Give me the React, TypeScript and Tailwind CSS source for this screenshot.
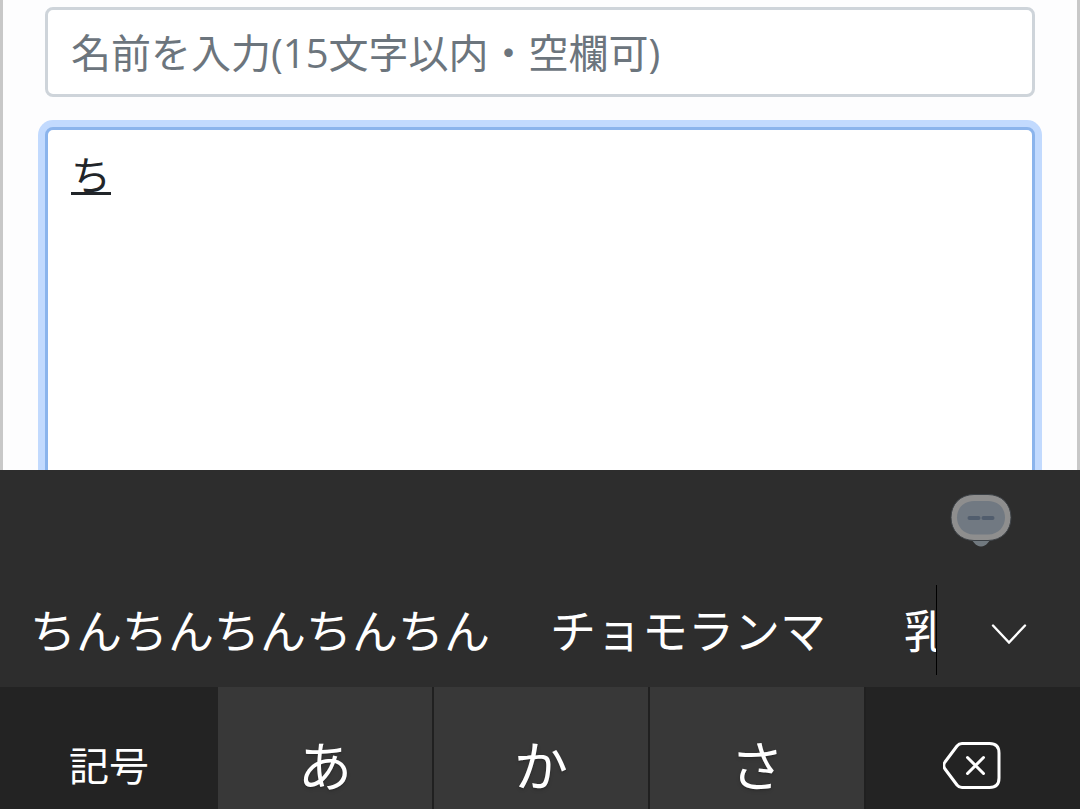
import { clsx } from "clsx";
import type { ReactNode } from "react";

type KeyProps = {
    children: ReactNode;
    label?: string;
    variant?: "kana" | "function";
};

const candidates = [
    { text: "ちんちんちんちんちん", className: "px-[30px]" },
    { text: "チョモランマ", className: "px-[30px]" },
    { text: "乳", className: "px-12" },
];

function AssistantIcon() {
    return (
        <svg width="66" height="58" viewBox="0 0 66 58" fill="none">
            <path d="M22 47h22c-4 2-5 7.500-11 7.500S26 49 22 47Z" fill="#71797f" />
            <path
                d="M26 2.500h14c14 0 23 10 23 23s-9 23-23 23H26C12 48.500 3 38.500 3 25.500s9-23 23-23Z"
                fill="#8e8e8e"
                stroke="#3b4045"
                strokeWidth="1"
            />
            <path
                d="M26 9h14c10.500 0 17 7.500 17 16.500s-6.500 17-17 17H26c-10.500 0-17-8-17-17S15.500 9 26 9Z"
                fill="#717982"
            />
            <path
                d="M21.500 26h9M35.500 26h9"
                stroke="#515d6d"
                strokeWidth="4"
                strokeLinecap="round"
            />
        </svg>
    );
}

function ChevronIcon() {
    return (
        <svg width="36" height="22" viewBox="0 0 36 22" fill="none">
            <path
                d="M2 2.500 18 19.500 34 2.500"
                stroke="#fff"
                strokeWidth="2.400"
                strokeLinecap="round"
            />
        </svg>
    );
}

function BackspaceIcon() {
    return (
        <svg width="60" height="50" viewBox="0 0 60 50" fill="none">
            <path
                d="M19 2.500h27.500q9.500 0 9.500 9.500v25q0 9.500-9.500 9.500H19q-3 0-5-2.500L2 28q-2.500-3.500 0-7L14 5q2-2.500 5-2.500Z"
                stroke="#fff"
                strokeWidth="3"
            />
            <path
                d="m24.500 16.500 16 16m0-16-16 16"
                stroke="#fff"
                strokeWidth="3"
                strokeLinecap="round"
            />
        </svg>
    );
}

function Key({ children, label, variant = "kana" }: KeyProps) {
    return (
        <button
            type="button"
            aria-label={label}
            className={clsx(
                "flex h-[158px] items-center justify-center",
                variant === "kana"
                    ? "border-r-2 border-[#202020] bg-[#383838] text-[54px] text-shadow-md"
                    : "bg-[#232323] text-[40px]",
            )}
        >
            {children}
        </button>
    );
}

function Keyboard() {
    return (
        <section className="shrink-0 bg-[#2d2d2d] text-white">
            <div className="flex h-[102px] items-center justify-end pr-[66px]">
                <button type="button" aria-label="アシスタント">
                    <AssistantIcon />
                </button>
            </div>
            <div className="flex h-[115px] items-center">
                <div className="flex h-[90px] min-w-0 flex-1 items-center overflow-hidden border-r border-black">
                    {candidates.map(({ text, className }) => (
                        <button
                            key={text}
                            type="button"
                            className={clsx(
                                "shrink-0 text-[46px] leading-none whitespace-nowrap",
                                className,
                            )}
                        >
                            {text}
                        </button>
                    ))}
                </div>
                <button
                    type="button"
                    aria-label="候補を展開"
                    className="flex h-[90px] w-[143px] items-center justify-center pt-2"
                >
                    <ChevronIcon />
                </button>
            </div>
            <div className="grid h-[122px] grid-cols-[218fr_216fr_216fr_216fr_214fr] overflow-hidden">
                <Key variant="function">記号</Key>
                <Key>あ</Key>
                <Key>か</Key>
                <Key>さ</Key>
                <Key variant="function" label="削除">
                    <BackspaceIcon />
                </Key>
            </div>
        </section>
    );
}

export default function App() {
    return (
        <div className="flex h-screen flex-col overflow-hidden font-['Open_Sans','Noto_Sans_CJK_JP',sans-serif]">
            <main className="min-h-0 flex-1 overflow-hidden border-x-3 border-[#c8c8c8] bg-[#fdfdfe]">
                <form className="flex flex-col gap-[30px] px-[42px] pt-[7px] font-[375]">
                    <input
                        type="text"
                        aria-label="名前"
                        maxLength={15}
                        placeholder="名前を入力(15文字以内・空欄可)"
                        className="h-[90px] w-full rounded-lg border-3 border-[#ced4da] bg-white px-[23px] text-[40px] text-[#212529] outline-none placeholder:text-[#6c757d]"
                    />
                    <textarea
                        aria-label="本文"
                        defaultValue="ち"
                        className="h-[480px] w-full resize-none rounded-lg border-3 border-[#8bb4ec] bg-white px-[23px] py-[15px] text-[40px] leading-[60px] text-[#212529] underline decoration-3 underline-offset-2 outline-none ring-7 ring-[#c2dafe] [text-decoration-skip-ink:none]"
                    />
                </form>
            </main>
            <Keyboard />
        </div>
    );
}
